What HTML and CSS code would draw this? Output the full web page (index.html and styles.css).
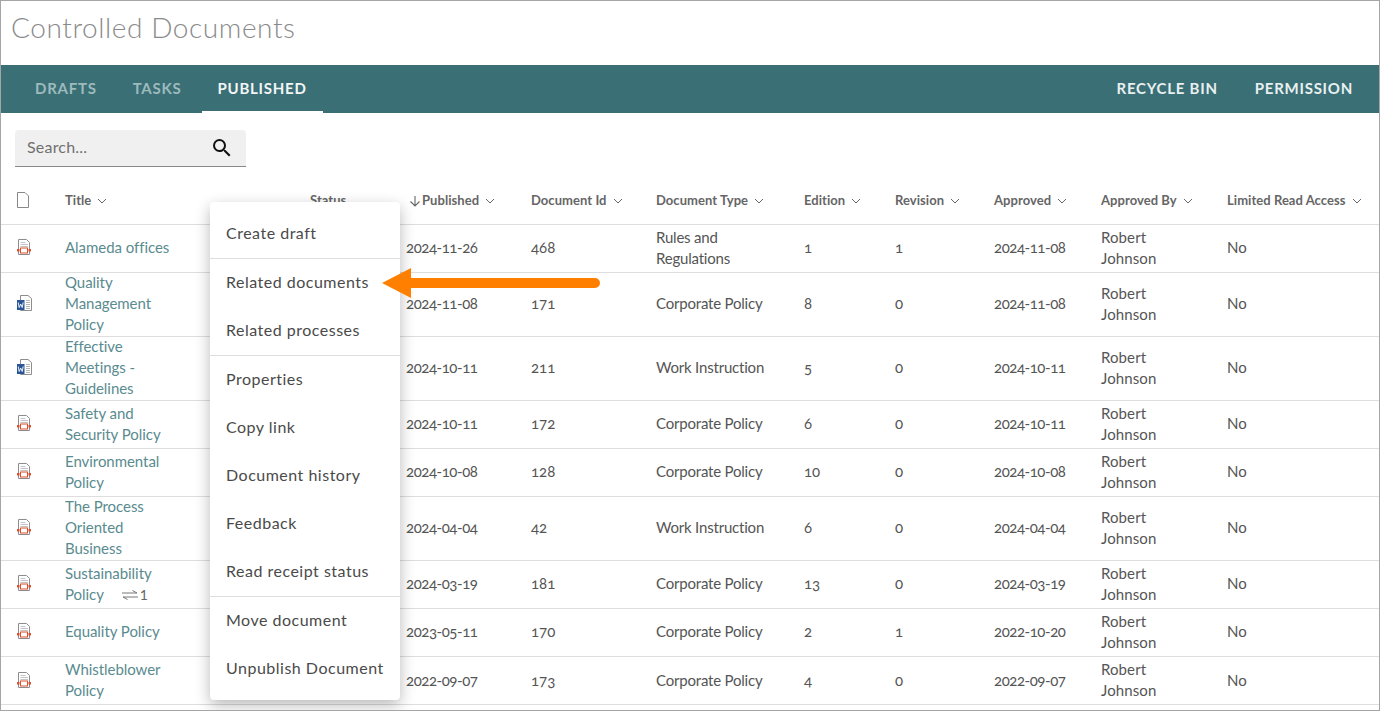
FILE: index.html
```html
<!DOCTYPE html>
<html lang="en">
<head>
<meta charset="utf-8">
<title>Controlled Documents</title>
<link rel="stylesheet" href="styles.css">
</head>
<body>
<svg class="defs" width="0" height="0" aria-hidden="true">
  <symbol id="chev" viewBox="0 0 10 6"><path d="M1 1l4 4 4-4" fill="none" stroke="#666" stroke-width="1"/></symbol>
  <symbol id="pdf" viewBox="0 0 14 16">
    <path d="M1.500.5h8l3 3v12h-11z" fill="#fff" stroke="#8d8d8d"/>
    <path d="M3.500 3.500h5M3.500 5.500h7.500M3.500 7.500h7.500" stroke="#c4c4c4"/>
    <rect x="3.500" y="9" width="7" height="5" fill="#fff" stroke="#d8502c"/>
    <rect x="0" y="10" width="2.500" height="2.500" fill="#d8502c"/>
    <rect x="11.500" y="10" width="2.500" height="2.500" fill="#d8502c"/>
  </symbol>
  <symbol id="word" viewBox="0 0 15 16">
    <path d="M3.500.5h7.500l3.500 3v12h-11z" fill="#fff" stroke="#8d8d8d"/>
    <path d="M9 5.500h4M9 7.500h4M9 9.500h4M9 11.500h4M9 13.500h4" stroke="#b5b5b5"/>
    <rect x="0" y="5" width="7.500" height="10" fill="#2a5699"/>
    <path d="M1.200 7.500l1 5 1.500-3.500 1.500 3.500 1-5" fill="none" stroke="#fff" stroke-width=".9"/>
  </symbol>
</svg>
<div class="app">
  <header class="page-head"><h1 class="page-title">Controlled Documents</h1></header>
  <nav class="tabs">
    <div class="tab-group">
      <a class="tab muted">DRAFTS</a>
      <a class="tab muted">TASKS</a>
      <a class="tab active">PUBLISHED</a>
    </div>
    <div class="tab-group">
      <a class="tab">RECYCLE BIN</a>
      <a class="tab tab-last">PERMISSION</a>
    </div>
  </nav>
  <div class="toolbar">
    <div class="search">
      <span class="search-text">Search...</span>
      <svg class="search-icon" viewBox="0 0 24 24"><path d="M15.500 14h-.79l-.28-.27A6.470 6.470 0 0 0 16 9.500 6.500 6.500 0 1 0 9.500 16c1.610 0 3.090-.59 4.230-1.570l.27.28v.79l5 4.990L20.490 19l-4.990-5zm-6 0C7.010 14 5 11.990 5 9.500S7.010 5 9.500 5 14 7.010 14 9.500 11.990 14 9.500 14z"/></svg>
    </div>
  </div>
  <table class="docs">
    <colgroup>
      <col class="c-icon"><col class="c-title"><col class="c-status"><col class="c-pub"><col class="c-id"><col class="c-type"><col class="c-ed"><col class="c-rev"><col class="c-appr"><col class="c-by"><col class="c-lim">
    </colgroup>
    <thead>
      <tr>
        <th><svg class="head-file" viewBox="0 0 12 16"><path d="M.5.500h7.500l3.500 3.500v11.500H.5z" fill="#fff" stroke="#888"/></svg></th>
        <th>Title<svg class="chev"><use href="#chev"/></svg></th>
        <th>Status</th>
        <th class="pub-head"><svg class="sort" viewBox="0 0 12 12"><path d="M6 1v10M1.500 6.500L6 11l4.500-4.500" fill="none" stroke="#666" stroke-width="1.100"/></svg>Published<svg class="chev"><use href="#chev"/></svg></th>
        <th>Document Id<svg class="chev"><use href="#chev"/></svg></th>
        <th>Document Type<svg class="chev"><use href="#chev"/></svg></th>
        <th>Edition<svg class="chev"><use href="#chev"/></svg></th>
        <th>Revision<svg class="chev"><use href="#chev"/></svg></th>
        <th>Approved<svg class="chev"><use href="#chev"/></svg></th>
        <th>Approved By<svg class="chev"><use href="#chev"/></svg></th>
        <th>Limited Read Access<svg class="chev"><use href="#chev"/></svg></th>
      </tr>
    </thead>
    <tbody>
      <tr class="h48"><td><svg class="file"><use href="#pdf"/></svg></td><td><a class="link">Alameda offices</a></td><td></td><td>2024-11-26</td><td>468</td><td>Rules and<br>Regulations</td><td>1</td><td>1</td><td>2024-11-08</td><td>Robert<br>Johnson</td><td>No</td></tr>
      <tr class="h64"><td><svg class="file word"><use href="#word"/></svg></td><td class="t3"><a class="link">Quality<br>Management<br>Policy</a></td><td></td><td>2024-11-08</td><td>171</td><td>Corporate Policy</td><td>8</td><td>0</td><td>2024-11-08</td><td>Robert<br>Johnson</td><td>No</td></tr>
      <tr class="h64"><td><svg class="file word"><use href="#word"/></svg></td><td class="t3"><a class="link">Effective<br>Meetings -<br>Guidelines</a></td><td></td><td>2024-10-11</td><td>211</td><td>Work Instruction</td><td>5</td><td>0</td><td>2024-10-11</td><td>Robert<br>Johnson</td><td>No</td></tr>
      <tr class="h48"><td><svg class="file"><use href="#pdf"/></svg></td><td><a class="link">Safety and<br>Security Policy</a></td><td></td><td>2024-10-11</td><td>172</td><td>Corporate Policy</td><td>6</td><td>0</td><td>2024-10-11</td><td>Robert<br>Johnson</td><td>No</td></tr>
      <tr class="h48"><td><svg class="file"><use href="#pdf"/></svg></td><td><a class="link">Environmental<br>Policy</a></td><td></td><td>2024-10-08</td><td>128</td><td>Corporate Policy</td><td>10</td><td>0</td><td>2024-10-08</td><td>Robert<br>Johnson</td><td>No</td></tr>
      <tr class="h64"><td><svg class="file"><use href="#pdf"/></svg></td><td class="t3"><a class="link">The Process<br>Oriented<br>Business</a></td><td></td><td>2024-04-04</td><td>42</td><td>Work Instruction</td><td>6</td><td>0</td><td>2024-04-04</td><td>Robert<br>Johnson</td><td>No</td></tr>
      <tr class="h48"><td><svg class="file"><use href="#pdf"/></svg></td><td><a class="link">Sustainability<br>Policy</a><span class="swap"><svg class="swap-icon" viewBox="0 0 16 12"><path d="M0 4h15M10.500 1.500L15 4M16 8H1M5.500 10.500L1 8" fill="none" stroke="#777"/></svg>1</span></td><td></td><td>2024-03-19</td><td>181</td><td>Corporate Policy</td><td>13</td><td>0</td><td>2024-03-19</td><td>Robert<br>Johnson</td><td>No</td></tr>
      <tr class="h48"><td><svg class="file"><use href="#pdf"/></svg></td><td><a class="link">Equality Policy</a></td><td></td><td>2023-05-11</td><td>170</td><td>Corporate Policy</td><td>2</td><td>1</td><td>2022-10-20</td><td>Robert<br>Johnson</td><td>No</td></tr>
      <tr class="h48"><td><svg class="file"><use href="#pdf"/></svg></td><td><a class="link">Whistleblower<br>Policy</a></td><td></td><td>2022-09-07</td><td>173</td><td>Corporate Policy</td><td>4</td><td>0</td><td>2022-09-07</td><td>Robert<br>Johnson</td><td>No</td></tr>
    </tbody>
  </table>
  <div class="menu">
    <div class="menu-item">Create draft</div>
    <hr class="menu-sep">
    <div class="menu-item">Related documents</div>
    <div class="menu-item">Related processes</div>
    <hr class="menu-sep">
    <div class="menu-item">Properties</div>
    <div class="menu-item">Copy link</div>
    <div class="menu-item">Document history</div>
    <div class="menu-item">Feedback</div>
    <div class="menu-item">Read receipt status</div>
    <hr class="menu-sep">
    <div class="menu-item">Move document</div>
    <div class="menu-item">Unpublish Document</div>
  </div>
  <svg class="callout" viewBox="0 0 218 30"><path d="M0 15L29 0v10h184a5 5 0 0 1 0 10H29v10z" fill="#ff8000"/></svg>
</div>
</body>
</html>
```
FILE: styles.css
```css
* { box-sizing: border-box; }
html, body { margin: 0; padding: 0; background: #fff; }
body { font-family: "Lato", "Open Sans", sans-serif; color: #444; font-feature-settings: "onum" 1; }
.defs { position: absolute; }
.app { position: relative; width: 1380px; height: 711px; overflow: hidden; border: 1px solid #a5a5a5; }
.page-head { height: 64px; display: flex; align-items: center; padding-left: 10px; }
.page-title { margin: 0 0 13px; font-size: 28px; font-weight: 300; color: #8a8a8a; letter-spacing: .58px; line-height: 36px; }
.tabs { height: 48px; background: #3a6f75; display: flex; justify-content: space-between; }
.tab-group { display: flex; gap: 4px; padding-left: 18px; }
.tab { height: 48px; line-height: 47px; padding: 0 16px; font-size: 15px; font-weight: 700; letter-spacing: .75px; color: #e9f0f1; }
.tab.muted { color: #9dbabd; }
.tab.active { color: #f2f6f6; box-shadow: inset 0 -2px 0 #fff; }
.tab-last { padding-right: 26px; margin-left: 1px; }
.toolbar { height: 53px; padding: 17px 0 0 14px; }
.search { width: 231px; height: 37px; background: #f0f0f0; border-bottom: 1px solid #888; border-radius: 4px 4px 0 0; display: flex; align-items: center; justify-content: space-between; padding: 0 12px 3px 12px; }
.search-text { font-size: 16px; color: #707070; letter-spacing: .2px; }
.search-icon { width: 24px; height: 24px; fill: #111; margin-top: 3px; }
.docs { table-layout: fixed; border-collapse: collapse; width: 1378px; }
.c-icon { width: 64px; } .c-title { width: 245px; } .c-status { width: 96px; } .c-pub { width: 125px; } .c-id { width: 125px; } .c-type { width: 148px; } .c-ed { width: 91px; } .c-rev { width: 99px; } .c-appr { width: 107px; } .c-by { width: 126px; } .c-lim { width: 152px; }
.docs thead tr { height: 58px; border-bottom: 1px solid #dedede; }
.docs th { text-align: left; padding: 11px 0 0; font-size: 13px; font-weight: 700; color: #666; letter-spacing: .05px; white-space: nowrap; }
.docs th:first-child, .docs td:first-child { padding-left: 16px; }
.head-file { width: 12px; height: 16px; display: block; }
.chev { width: 10px; height: 6px; margin-left: 6px; vertical-align: 1px; }
.pub-head { padding-left: 3px !important; }
.sort { width: 12px; height: 12px; margin-right: 1px; vertical-align: -2px; }
.docs td { padding: 0; font-size: 15px; line-height: 21px; color: #555; letter-spacing: 0; vertical-align: middle; }
.docs td:not(:has(br)) { padding-bottom: 2px; }
.docs tbody tr:last-child td:not(:has(br)) { padding-bottom: 0; }
.t3 .link { display: block; margin-top: -2px; }
.docs td:nth-child(4), .docs td:nth-child(9) { letter-spacing: -.45px; }
.docs td:nth-child(6) { letter-spacing: -.2px; }
.docs td:nth-child(10) { letter-spacing: .1px; }
.docs tbody tr { border-bottom: 1px solid #dedede; }
.h48 { height: 48px; } .h64 { height: 64px; }
.file { width: 14px; height: 16px; display: block; }
.file.word { width: 15px; }
.link { color: #5a8b8f; letter-spacing: -.05px; }
.swap { font-size: 14px; color: #666; margin-left: 18px; font-feature-settings: "lnum" 1; }
.swap-icon { width: 16px; height: 12px; margin-right: 2px; vertical-align: -1px; }
.menu { position: absolute; left: 209px; top: 201px; width: 190px; padding: 8px 0 7px; background: #fff; border-radius: 4px; box-shadow: 0 5px 15px rgba(0,0,0,.28); }
.menu-item { height: 48px; line-height: 46px; padding-left: 16px; font-size: 16px; color: #4a4a4a; letter-spacing: .5px; white-space: nowrap; }
.menu-sep { margin: 0; border: 0; height: 1px; background: #dedede; }
.callout { position: absolute; left: 381px; top: 267px; width: 218px; height: 30px; }
```
